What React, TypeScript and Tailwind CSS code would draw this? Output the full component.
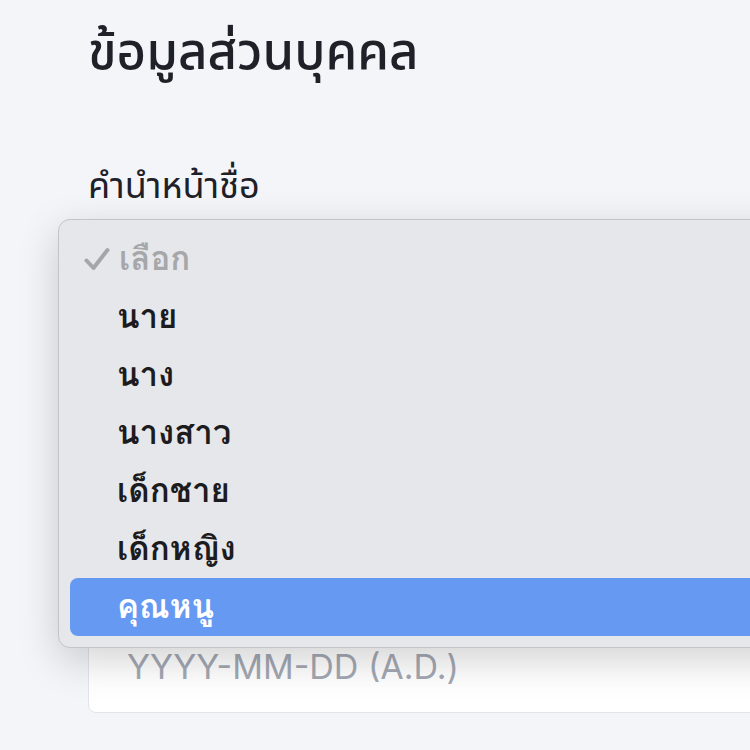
import React from 'react';

// ─── Constants ───────────────────────────────────────────────────────

const PREFIXES = ['นาย', 'นาง', 'นางสาว', 'เด็กชาย', 'เด็กหญิง', 'คุณหนู'];
const SELECTED = 'คุณหนู';

// ─── Check Icon ──────────────────────────────────────────────────────

function CheckMark() {
    return (
        <svg viewBox="0 0 26 24" className="h-[24px] w-[26px]" fill="none">
            <path
                d="M2.5 13.5 L9.5 21 L23.5 3"
                stroke="#a5a6a9"
                strokeWidth="4"
                strokeLinecap="round"
                strokeLinejoin="round"
            />
        </svg>
    );
}

// ─── Dropdown (native-like popup) ────────────────────────────────────

function PrefixMenu() {
    return (
        <div className="absolute left-[58px] top-[219px] w-[760px] rounded-l-[12px] border border-[#c3c4c8] bg-[#e6e7eb] pt-[10px] pb-[11px] pl-[11px] font-['Loma','Noto_Sans_Thai',sans-serif] shadow-[0_12px_40px_rgba(0,0,0,0.18)]">
            <div className="flex h-[58px] items-center">
                <span className="flex w-[49px] justify-center pl-[4px]">
                    <CheckMark />
                </span>
                <span className="text-[33px] font-bold text-[#a6a7aa]">เลือก</span>
            </div>
            {PREFIXES.map((p) => {
                const active = p === SELECTED;
                return (
                    <div
                        key={p}
                        className={`flex h-[58px] items-center rounded-l-[8px] pl-[47px] text-[33px] font-bold ${
                            active ? 'bg-[#6699f2] text-white' : 'text-[#1c1c1e]'
                        }`}
                    >
                        {p}
                    </div>
                );
            })}
        </div>
    );
}

// ─── Page ────────────────────────────────────────────────────────────

export default function App() {
    return (
        <div className="relative h-[750px] w-[750px] overflow-hidden bg-[#f3f5f9] font-['Noto_Sans_Thai','Noto_Sans',sans-serif]">
            <div className="pl-[88px] pt-[22px]">
                <h1 className="text-[51px] leading-[64px] font-medium text-[#1e2128]">ข้อมูลส่วนบุคคล</h1>

                <label className="mt-[79px] block text-[36px] leading-[44px] text-[#1e2128]">คำนำหน้าชื่อ</label>
                <div className="mt-[14px] h-[88px] w-[720px] rounded-[8px] border border-[#e1e4ea] bg-white" />

                {/* date of birth field, mostly under the popup */}
                <div className="mt-[310px] flex h-[92px] w-[720px] items-center rounded-[8px] border border-[#e1e4ea] bg-white pl-[38px]">
                    <span className="font-['Inter',sans-serif] text-[34px] leading-[40px] text-[#a3a8b3]">
                        YYYY-MM-DD (A.D.)
                    </span>
                </div>
            </div>

            <PrefixMenu />
        </div>
    );
}
